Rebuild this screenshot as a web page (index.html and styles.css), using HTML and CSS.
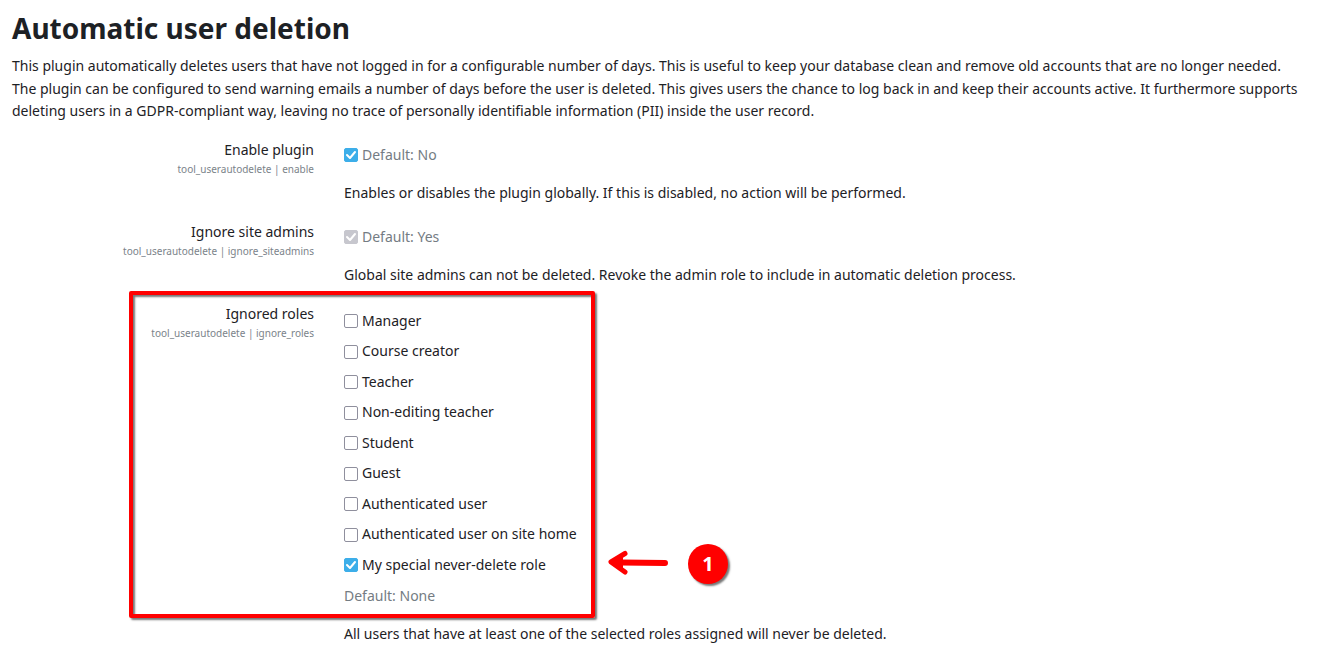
FILE: index.html
```html
<!DOCTYPE html>
<html lang="en">
<head>
<meta charset="utf-8">
<title>Automatic user deletion</title>
<link rel="stylesheet" href="styles.css">
</head>
<body>
<main class="page">
  <h1 class="title">Automatic user deletion</h1>
  <p class="intro">This plugin automatically deletes users that have not logged in for a configurable number of days. This is useful to keep your database clean and remove old accounts that are no longer needed.<br>The plugin can be configured to send warning emails a number of days before the user is deleted. This gives users the chance to log back in and keep their accounts active. It furthermore supports deleting users in a GDPR-compliant way, leaving no trace of personally identifiable information (PII) inside the user record.</p>
  <form class="settings">
    <div class="row">
      <div class="name"><label for="enable">Enable plugin</label><span class="key">tool_userautodelete | enable</span></div>
      <div class="setting">
        <div class="single"><input class="check" type="checkbox" id="enable" checked><span class="default">Default: No</span></div>
        <p class="help">Enables or disables the plugin globally. If this is disabled, no action will be performed.</p>
      </div>
    </div>
    <div class="row">
      <div class="name"><label for="admins">Ignore site admins</label><span class="key">tool_userautodelete | ignore_siteadmins</span></div>
      <div class="setting">
        <div class="single"><input class="check" type="checkbox" id="admins" checked disabled><span class="default">Default: Yes</span></div>
        <p class="help">Global site admins can not be deleted. Revoke the admin role to include in automatic deletion process.</p>
      </div>
    </div>
    <div class="row" role="group" aria-labelledby="roles">
      <div class="name"><span id="roles">Ignored roles</span><span class="key">tool_userautodelete | ignore_roles</span></div>
      <div class="setting">
        <ul class="roles">
          <li><input class="check" type="checkbox" id="r1"><label for="r1">Manager</label></li>
          <li><input class="check" type="checkbox" id="r2"><label for="r2">Course creator</label></li>
          <li><input class="check" type="checkbox" id="r3"><label for="r3">Teacher</label></li>
          <li><input class="check" type="checkbox" id="r4"><label for="r4">Non-editing teacher</label></li>
          <li><input class="check" type="checkbox" id="r5"><label for="r5">Student</label></li>
          <li><input class="check" type="checkbox" id="r6"><label for="r6">Guest</label></li>
          <li><input class="check" type="checkbox" id="r7"><label for="r7">Authenticated user</label></li>
          <li><input class="check" type="checkbox" id="r8"><label for="r8">Authenticated user on site home</label></li>
          <li><input class="check" type="checkbox" id="r9" checked><label for="r9">My special never-delete role</label></li>
        </ul>
        <div class="default">Default: None</div>
        <p class="help">All users that have at least one of the selected roles assigned will never be deleted.</p>
      </div>
      <div class="frame"></div>
      <svg class="arrow" viewBox="0 0 66 30" aria-hidden="true"><path d="M60 15L16 14.500" fill="none" stroke="#f00" stroke-width="6" stroke-linecap="round"/><path d="M20 5.500L6 14L20 24" fill="none" stroke="#f00" stroke-width="5" stroke-linecap="round" stroke-linejoin="round"/><path d="M5 14.500L18 8V21Z" fill="#f00"/></svg>
      <div class="badge">1</div>
    </div>
  </form>
</main>
</body>
</html>
```
FILE: styles.css
```css
* { box-sizing: border-box; }
body {
  margin: 0;
  background: #fff;
  color: #1d2125;
  font: 14px/1.61 "Noto Sans", sans-serif;
}
.page { padding: 10px 12px 0; }
.title { margin: 0 0 8px; font-size: 28px; line-height: 37px; font-weight: 700; }
.intro { margin: 0 0 16px; }
.row { position: relative; display: grid; grid-template-columns: 302px 1fr; column-gap: 30px; margin-bottom: 16px; }
.name { text-align: right; }
.name > label, .name > #roles { display: block; }
.key { display: block; font-size: 10px; line-height: 16px; color: #7b838a; }
.setting { padding-top: 5px; }
.single, .roles li { display: flex; align-items: center; gap: 4px; }
.default { color: #747c83; }
.help { margin: 16px 0 0; }
.roles { list-style: none; margin: 2px 0 8px; padding: 0; display: grid; row-gap: 8px; }
.check {
  appearance: none;
  width: 14px;
  height: 14px;
  margin: 0;
  border: 1px solid #8f8f9d;
  border-radius: 2px;
  background: #fff;
}
.check:checked {
  border-color: #3daee9;
  background: #3daee9 url("data:image/svg+xml,%3Csvg xmlns='http://www.w3.org/2000/svg' viewBox='0 0 12 12'%3E%3Cpath d='M2 6L5 9L10 3' fill='none' stroke='white' stroke-width='2' stroke-linecap='round' stroke-linejoin='round'/%3E%3C/svg%3E") center / 12px;
}
.check:disabled { border-color: #c7c7ce; background-color: #c7c7ce; }
.frame {
  position: absolute;
  left: 117px;
  top: -12px;
  width: 466px;
  height: 327px;
  border: 4px solid #f00;
  border-radius: 2px;
  box-shadow: 2px 2px 2px #0008, inset 2px 2px 2px #0008;
  pointer-events: none;
}
.arrow { position: absolute; left: 593px; top: 245px; width: 66px; height: 30px; }
.badge {
  position: absolute;
  left: 676px;
  top: 241px;
  width: 40px;
  height: 40px;
  border-radius: 50%;
  background: #f00;
  color: #fff;
  font: 700 20px/40px "Open Sans", sans-serif;
  text-align: center;
  box-shadow: 2px 2px 2px #0008;
}
```
